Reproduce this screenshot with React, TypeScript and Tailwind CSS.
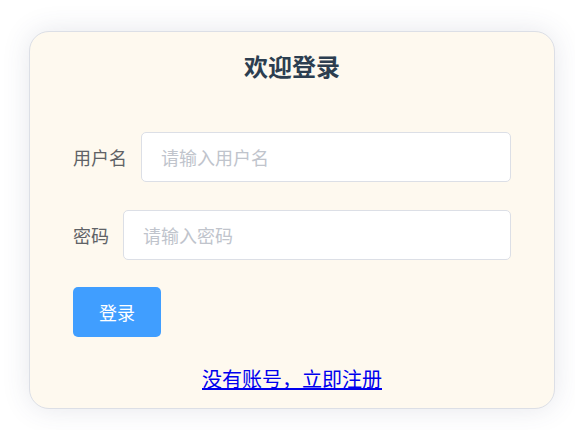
const cjk = { fontFamily: '"Noto Sans CJK SC", "Noto Sans", sans-serif' };

function Field({ label, placeholder, type = "text" }: { label: string; placeholder: string; type?: string }) {
  return (
    <div className="flex items-center mb-[28px]">
      <label className="pr-[14px] text-[18px] leading-[50px] text-[#606266]">{label}</label>
      <input
        type={type}
        placeholder={placeholder}
        style={cjk}
        className="flex-1 h-[50px] min-w-0 rounded-[5px] border border-[#dcdfe6] bg-white px-[19px] text-[18px] text-[#606266] outline-none placeholder:text-[#c0c4cc]"
      />
    </div>
  );
}

export default function App() {
  return (
    <div className="min-h-screen bg-white pt-[31px] pl-[29px]" style={cjk}>
      <div className="w-[526px] h-[378px] rounded-[20px] border border-[#dcdfe6] bg-[#fef9ef] px-[43px] shadow-[0_0_28px_rgba(60,70,110,0.13)]">
        <h2 className="pt-[16px] text-center text-[24px] font-bold leading-[36px] text-[#2c3e50]">欢迎登录</h2>

        <form className="mt-[48px]" onSubmit={(e) => e.preventDefault()}>
          <Field label="用户名" placeholder="请输入用户名" />
          <Field label="密码" placeholder="请输入密码" type="password" />
          <button
            type="submit"
            className="block -mt-px w-[88px] h-[50px] rounded-[5px] bg-[#409eff] text-[18px] text-white"
          >
            登录
          </button>
        </form>

        <div className="mt-[27px] text-center text-[20px] leading-[30px]">
          <a href="#" className="text-[#0000ee] underline">没有账号，立即注册</a>
        </div>
      </div>
    </div>
  );
}
